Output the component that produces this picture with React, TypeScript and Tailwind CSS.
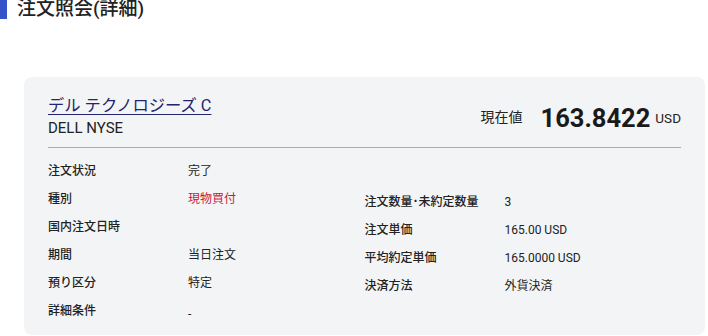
const leftRows: { label: string; value: string; red?: boolean }[] = [
  { label: "注文状況", value: "完了" },
  { label: "種別", value: "現物買付", red: true },
  { label: "国内注文日時", value: "" },
  { label: "期間", value: "当日注文" },
  { label: "預り区分", value: "特定" },
  { label: "詳細条件", value: "-" },
];

const rightRows = [
  { label: "注文数量･未約定数量", value: "3" },
  { label: "注文単価", value: "165.00 USD" },
  { label: "平均約定単価", value: "165.0000 USD" },
  { label: "決済方法", value: "外貨決済" },
];

const App = () => {
  return (
    <div
      className="w-[708px] h-[336px] overflow-hidden bg-white text-[#222]"
      style={{ fontFamily: 'Roboto, "Noto Sans CJK JP", sans-serif' }}
    >
      <div className="flex items-start h-[19px]">
        <div className="w-[7px] h-[19px] bg-[#3553c8]" />
        <h1 className="ml-[10px] -mt-[1px] text-[19px] leading-[20px] font-medium text-[#222]">
          注文照会(詳細)
        </h1>
      </div>

      <section className="ml-[24px] mr-[3px] mt-[58px] h-[258px] rounded-lg bg-[#f3f4f6] px-[24px] pt-[18px]">
        <div className="flex items-center justify-between pb-[9px] border-b border-[#a9abb8]">
          <div>
            <a href="#" className="block text-[16.3px] leading-[22px] text-[#22246e] underline underline-offset-[3px]">
              デル テクノロジーズ C
            </a>
            <div className="text-[15px] leading-[20px] mt-[1px]">DELL NYSE</div>
          </div>
          <div className="flex items-center pt-[2px]">
            <span className="text-[14px]">現在値</span>
            <span className="ml-[18px] text-[25.5px] leading-[30px] font-bold text-[#1a1a1a]">163.8422</span>
            <span className="ml-[5px] text-[13.5px] mt-[2px]">USD</span>
          </div>
        </div>

        <div className="grid grid-cols-2 pt-[9px]">
          <div>
            {leftRows.map((r) => (
              <div key={r.label} className="flex h-[28px] items-center text-[12px]">
                <span className="w-[140px] font-medium">{r.label}</span>
                <span className={r.red ? "text-[#c8183c]" : r.value === "-" ? "mt-[5px]" : ""}>{r.value}</span>
              </div>
            ))}
          </div>
          <div className="pt-[31px]">
            {rightRows.map((r) => (
              <div key={r.label} className="flex h-[28px] items-center text-[12px]">
                <span className="w-[140px] font-medium">{r.label}</span>
                <span>{r.value}</span>
              </div>
            ))}
          </div>
        </div>
      </section>
    </div>
  );
};

export default App;
